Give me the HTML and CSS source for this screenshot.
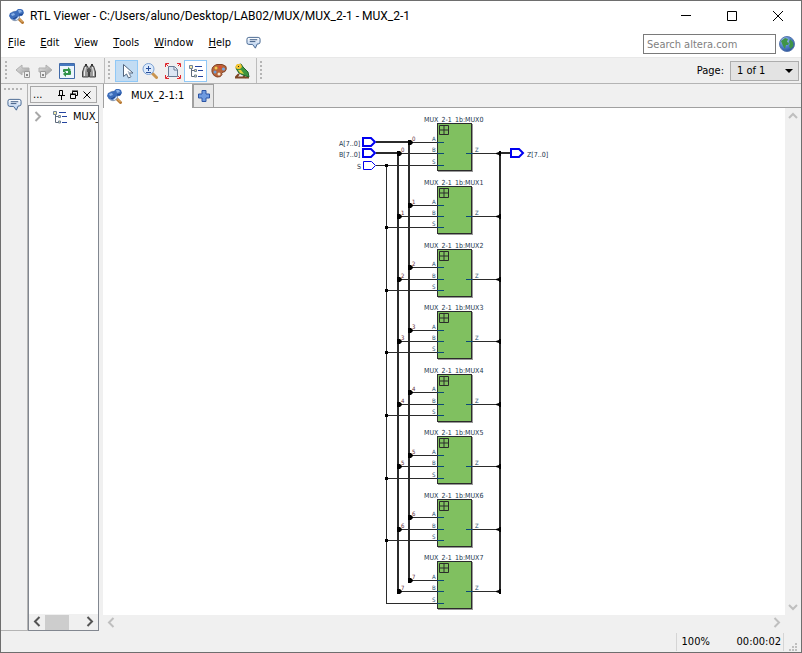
FILE: index.html
```html
<!DOCTYPE html>
<html lang="en">
<head>
<meta charset="utf-8">
<title>RTL Viewer</title>
<link rel="stylesheet" href="styles.css">
</head>
<body>
<svg class="defs" aria-hidden="true">
  <defs>
    <radialGradient id="ball" cx="35%" cy="30%" r="75%"><stop offset="0" stop-color="#c4dafa"/><stop offset=".5" stop-color="#5585d0"/><stop offset="1" stop-color="#284f9a"/></radialGradient>
    <linearGradient id="bubble-fill" x2="0" y2="1"><stop offset="0" stop-color="#fff"/><stop offset="1" stop-color="#a9c6ec"/></linearGradient>
    <linearGradient id="arrow-fill" x2="1" y2="1"><stop offset="0" stop-color="#e4e4e4"/><stop offset="1" stop-color="#9c9c9c"/></linearGradient>
    <symbol id="viewer" viewBox="0 0 16 16">
      <path d="M9 10l4.500 4.500" stroke="#b87a35" stroke-width="3" stroke-linecap="round"/>
      <path d="M9.500 10l4 4" stroke="#eec078"/>
      <circle cx="6" cy="8" r="4.700" fill="#e4edf8" stroke="#8396b2"/>
      <path d="M7 3l2-2 3 0 2 1 1 3-2 3-3 0-2 2-2 2-4-1-2-3 1-3 3-1z" fill="#3c6dbb"/>
      <path d="M9 2l3 0 1 2-3 1zM2 6l3-1 1 2-3 1z" fill="#8ab2e8"/>
      <path d="M10 7l4-1M4 11l4-2" stroke="#1f458d"/>
    </symbol>
    <symbol id="bubble" viewBox="0 0 16 14">
      <path d="M3 1h10q2 0 2 2v3q0 2-2 2h-1l-2 4.500L7 8.500H3q-2 0-2-2V3q0-2 2-2z" fill="url(#bubble-fill)" stroke="#43648f"/>
      <path d="M4 3.500h8M4 5.500h6" stroke="#36557f"/>
    </symbol>
    <symbol id="tree" viewBox="0 0 16 16">
      <path d="M3.500 5v8.500M3.500 7.500H6M3.500 13.500H6" stroke="#5e6a7a" fill="none"/>
      <path d="M1.500 2.500h3v3h-3zM6.500 6.500h2v2h-2zM6.500 12h2v2h-2z" fill="#f3e9a8" stroke="#71859a"/>
      <path d="M7 3.500h7M10 7.500h5M10 13.500h5" stroke="#2444a0"/>
    </symbol>
    <symbol id="left" viewBox="0 0 16 16"><path d="M10.500 3L6 7.500l4.500 4.500" fill="none" stroke="currentColor" stroke-width="2"/></symbol>
    <symbol id="right" viewBox="0 0 16 16"><path d="M5.500 3L10 7.500 5.500 12" fill="none" stroke="currentColor" stroke-width="2"/></symbol>
    <symbol id="up" viewBox="0 0 16 16"><path d="M4 10l4-4 4 4" fill="none" stroke="currentColor" stroke-width="2"/></symbol>
    <symbol id="down" viewBox="0 0 16 16"><path d="M4 6l4 4 4-4" fill="none" stroke="currentColor" stroke-width="2"/></symbol>
  </defs>
</svg>
<div class="window">
  <header class="titlebar">
    <svg class="icon"><use href="#viewer"/></svg>
    <h1>RTL Viewer - C:/Users/aluno/Desktop/LAB02/MUX/MUX_2-1 - MUX_2-1</h1>
    <div class="caption">
      <button aria-label="Minimize"><svg viewBox="0 0 12 12"><path d="M1 5.500h10"/></svg></button>
      <button aria-label="Maximize"><svg viewBox="0 0 12 12"><path d="M1.500 1.500h9v9h-9z"/></svg></button>
      <button aria-label="Close"><svg viewBox="0 0 12 12"><path d="M1 1l10 10M11 1L1 11"/></svg></button>
    </div>
  </header>
  <div class="menubar">
    <nav>
      <button><u>F</u>ile</button><button><u>E</u>dit</button><button><u>V</u>iew</button><button><u>T</u>ools</button><button><u>W</u>indow</button><button><u>H</u>elp</button>
      <button aria-label="Feedback"><svg class="bubble"><use href="#bubble"/></svg></button>
    </nav>
    <form class="search">
      <input type="text" placeholder="Search altera.com" aria-label="Search altera.com">
      <button type="button" aria-label="Search the web">
        <svg class="icon" viewBox="0 0 16 16"><circle cx="8" cy="8" r="7.500" fill="url(#ball)" stroke="#5878ae"/><path d="M2 5l4-3 3 1-1 3 2 1-1 2H7l-1 4-2-3zM11 3l3 3 .500 4-3 3-1.500-3 1-2-1-2z" fill="#3f9448"/></svg>
      </button>
    </form>
  </div>
  <div class="toolbar">
    <i class="grip"></i>
    <div class="tools nav-tools">
      <button aria-label="Back"><svg class="icon" viewBox="0 0 16 16"><path d="M1 7l6-5v3h7v4H7v3z" fill="url(#arrow-fill)" stroke="#b0b0b0"/><path d="M9.500 8.500h5v6h-5z" fill="#eee" stroke="#999"/><path d="M11 11h2v2h-2z" fill="#888"/></svg></button>
      <button aria-label="Forward"><svg class="icon" viewBox="0 0 16 16"><path d="M15 7L9 2v3H2v4h7v3z" fill="url(#arrow-fill)" stroke="#b0b0b0"/><path d="M3.500 8.500h5v6h-5z" fill="#eee" stroke="#999"/><path d="M5 11h2v2H5z" fill="#888"/></svg></button>
      <button aria-label="Refresh"><svg class="icon" viewBox="0 0 16 16"><path d="M.500.500h15v15H.500z" fill="#edf5fc" stroke="#416aa8"/><path d="M1 1h14v2H1z" fill="#4679c0"/><path d="M4 9V7q0-1 1-1h4V4l3 3-3 3V8H6v1zM12 8v3q0 1-1 1H7v2l-3-3 3-3v2h3V8z" fill="#309349"/></svg></button>
      <button aria-label="Find"><svg class="icon" viewBox="0 0 16 16"><path d="M3.500 3h3l1 3v8h-6v-5zM9.500 3h3l2 6v5h-6V6z" fill="#999" stroke="#444"/><path d="M6 6h4v3H6z" fill="#555"/><path d="M4.500 4l-1 5v4M11.500 4l1 5v4" stroke="#eee" fill="none"/><path d="M4 2h2M10 2h2" stroke="#333" stroke-width="2"/></svg></button>
    </div>
    <i class="rule"></i><i class="grip"></i>
    <div class="tools">
      <button class="pressed" aria-label="Selection tool"><svg class="icon" viewBox="0 0 16 16"><path d="M4.500 1.500v12l3-2.500 2 4 2.500-1.300-2-3.700h4z" fill="#fff" stroke="#52647c"/><path d="M9 8l3 6" stroke="#9eacbf"/></svg></button>
      <button aria-label="Zoom tool"><svg class="icon" viewBox="0 0 16 16"><path d="M10.500 10.500l4 4" stroke="#c99550" stroke-width="3" stroke-linecap="round"/><circle cx="6.500" cy="6" r="5.500" fill="#dceafb" stroke="#7ba0d2"/><path d="M4 5.500h5M6.500 3v5M4 9.500h5" stroke="#284e9b"/></svg></button>
      <button aria-label="Fit in window"><svg class="icon" viewBox="0 0 16 16"><path d="M3.500 3.500h6l3 3v7h-9z" fill="#dce6f3" stroke="#667b95"/><path d="M9 4v3h3" fill="#fff" stroke="#667b95"/><path d="M.500 4V.500H4M12 .500h3.500V4M.500 12v3.500H4M15.500 12v3.500H12M1 1l2 2M15 1l-2 2M1 15l2-2M15 15l-2-2" fill="none" stroke="#e1262d"/></svg></button>
      <button class="pressed checked" aria-label="Netlist navigator"><svg class="icon"><use href="#tree"/></svg></button>
      <button aria-label="Color settings"><svg class="icon" viewBox="0 0 16 16"><path d="M1 9Q0 3 6 1.500q6-1 9 2 1 3-1 5l-3 1q-1 0 0 2-1 3-5 2.500-4-1-5-5z" fill="#b8653a" stroke="#824225"/><circle cx="5" cy="5" r="1.500" fill="#f3ca50"/><circle cx="9" cy="4" r="1.500" fill="#e0492d"/><circle cx="12.500" cy="6" r="1.500" fill="#72a8e8"/><circle cx="4" cy="9" r="1.500" fill="#69a0dc"/><circle cx="8" cy="11" r="1.500" fill="#f4e4ce"/></svg></button>
      <button aria-label="Bird's eye view"><svg class="icon" viewBox="0 0 16 16"><path d="M1 14.500h14M5 11l-3 3M9 13l3 2" stroke="#7e4725" stroke-width="2"/><path d="M2 5l1-3 4-1 2 3 5 5 1 5-6-2-4-2-2-3z" fill="#3f963e" stroke="#24642c"/><path d="M1 4l2-3 4 0 1 3-2 2-3 0z" fill="#f1c332"/><path d="M4 7l3 0 3 4-4-1z" fill="#e5d33e"/><path d="M4 3h1v1H4z" fill="#222"/></svg></button>
    </div>
    <i class="rule"></i><i class="grip"></i>
    <label class="page">Page: <span class="select"><select><option>1 of 1</option></select></span></label>
  </div>
  <main>
    <aside class="dock"><i class="hgrip"></i><button aria-label="Messages"><svg class="bubble"><use href="#bubble"/></svg></button></aside>
    <section class="navigator">
      <div class="panel-title"><span>...</span>
        <button aria-label="Pin"><svg viewBox="0 0 10 10"><path d="M3.500 5V.500h3V5M2 5.500h7M5.500 6v4"/></svg></button>
        <button aria-label="Float"><svg viewBox="0 0 10 10"><path d="M3.500 4V1.500h5v4H7M1.500 4.500h5v4h-5zM3 1h6M1 4h6"/></svg></button>
        <button aria-label="Close panel"><svg viewBox="0 0 10 10"><path d="M1.500 1.500l7 7M8.500 1.500l-7 7"/></svg></button>
      </div>
      <div class="tree">
        <div class="node"><svg class="icon expand"><use href="#right"/></svg><svg class="icon"><use href="#tree"/></svg><span>MUX_2-1</span></div>
        <div class="hscroll"><button aria-label="Scroll left"><svg class="icon"><use href="#left"/></svg></button><i class="thumb"></i><button aria-label="Scroll right"><svg class="icon"><use href="#right"/></svg></button></div>
      </div>
    </section>
    <section class="workspace">
      <div class="tabs">
        <button class="tab"><svg class="icon"><use href="#viewer"/></svg>MUX_2-1:1</button>
        <button class="add" aria-label="New tab"><svg class="icon" viewBox="0 0 16 16"><path d="M6 2.500h4V6h3.500v4H10v3.500H6V10H2.500V6H6z" fill="#6f9be0" stroke="#2c55a5"/></svg></button>
      </div>
      <div class="view">
        <div class="canvas"><svg id="schematic" viewBox="334 108 220 506" width="220" height="506" role="img" aria-label="MUX_2-1 schematic"></svg></div>
        <div class="vbar"><svg class="icon"><use href="#up"/></svg><svg class="icon"><use href="#down"/></svg></div>
        <div class="hbar"><svg class="icon"><use href="#left"/></svg><svg class="icon"><use href="#right"/></svg></div>
      </div>
    </section>
  </main>
  <footer><span class="zoom">100%</span><span class="time">00:00:02</span>
    <svg class="size-grip" viewBox="0 0 9 9"><path d="M6 0h2v2H6zM3 3h2v2H3zM6 3h2v2H6zM0 6h2v2H0zM3 6h2v2H3zM6 6h2v2H6z" fill="#bfbfbf"/></svg>
  </footer>
</div>
<script src="script.js"></script>
</body>
</html>
```
FILE: styles.css
```css
* { box-sizing: border-box; }
body { margin: 0; font: 11px/14px "DejaVu Sans Condensed", "DejaVu Sans", sans-serif; color: #000; }
button { padding: 0; border: 0; background: none; font: inherit; color: inherit; display: flex; align-items: center; justify-content: center; }
svg { display: block; flex: none; }
.defs { position: absolute; width: 0; height: 0; }
.icon { width: 16px; height: 16px; }
.bubble { width: 15px; height: 14px; }
.window { height: 100vh; display: flex; flex-direction: column; background: #f0f0f0; border: 1px solid #6e6e6e; overflow: hidden; }

.titlebar { height: 29px; flex: none; display: flex; align-items: center; padding-left: 8px; gap: 5px; background: #fff; }
h1 { margin: 0; font: 12px/16px Roboto, sans-serif; white-space: nowrap; }
.caption { margin-left: auto; display: flex; }
.caption button { width: 46px; height: 28px; }
.caption svg { width: 12px; height: 12px; fill: none; stroke: #000; }

.menubar { height: 28px; flex: none; display: flex; background: #fff; border-bottom: 1px solid #e8e8e8; }
nav { display: flex; align-items: center; gap: 15px; padding: 0 0 2px 7px; }
.search { margin-left: auto; display: flex; gap: 3px; padding: 3px 6px 2px 2px; align-items: center; }
.search input { width: 133px; height: 20px; padding: 0 3px; border: 1px solid #7a7a7a; font: inherit; }
.search input::placeholder { color: #7f7f7f; opacity: 1; }

.toolbar { height: 26px; flex: none; display: flex; align-items: center; gap: 3px; padding: 0 2px 0 4px; border-bottom: 1px solid #b4b4b4; }
.grip { width: 4px; height: 19px; background: radial-gradient(circle at 1px 1px, #b5b5b5 1px, transparent 1px) 0 0 / 4px 4px; }
.rule { width: 1px; height: 25px; background: #bdbdbd; }
.tools { display: flex; }
.tools button { width: 23px; height: 22px; }
.nav-tools { padding-right: 1px; }
.nav-tools button { width: 22px; }
.tools .pressed { background: #c2dcf3; border: 1px solid #90c8f6; }
.tools .checked { background: #fff; }
.page { margin-left: auto; display: flex; align-items: center; gap: 6px; }
.select { position: relative; }
.select::after { content: ""; position: absolute; right: 6px; top: 8px; border: 4px solid transparent; border-top-color: #000; pointer-events: none; }
select { appearance: none; display: block; width: 69px; height: 20px; padding: 0 6px; border: 1px solid #adadad; border-radius: 0; background: #e3e3e3; font: inherit; color: #000; }

main { flex: 1; min-height: 0; display: flex; }
.dock { width: 27px; display: flex; flex-direction: column; align-items: center; padding-top: 4px; gap: 8px; border-right: 1px solid #b4b4b4; border-bottom: 1px solid #b4b4b4; }
.hgrip { width: 20px; height: 2px; background: radial-gradient(circle at 1px 1px, #b5b5b5 1px, transparent 1px) 0 0 / 4px 4px; }
.navigator { width: 71px; display: flex; flex-direction: column; padding-top: 2px; }
.panel-title { height: 17px; margin: 0 2px 2px; padding: 0 4px 0 2px; display: flex; align-items: center; gap: 3px; border: 1px solid #a8a8a8; }
.panel-title span { margin-right: auto; }
.panel-title svg { width: 10px; height: 10px; fill: none; stroke: #000; }
.tree { flex: 1; min-height: 0; display: flex; flex-direction: column; border: 1px solid #828790; background: #fff; }
.node { display: flex; align-items: center; height: 22px; padding-left: 1px; overflow: hidden; white-space: nowrap; }
.node .expand { color: #a8a8a8; margin-right: 6px; }
.node span { margin-left: 5px; }
.hscroll { margin-top: auto; height: 16px; display: flex; align-items: center; background: #f0f0f0; color: #555; }
.thumb { width: 24px; height: 15px; background: #cdcdcd; }
.hscroll button:last-child { margin-left: auto; }

.workspace { flex: 1; min-width: 0; display: flex; flex-direction: column; margin-left: 4px; }
.tabs { display: flex; height: 24px; flex: none; border-bottom: 1px solid #a0a0a0; }
.tab { height: 24px; gap: 8px; padding: 0 8px 0 3px; background: #fff; border-left: 1px solid #a0a0a0; }
.add { width: 22px; height: 24px; border: 1px solid #a0a0a0; border-left-width: 2px; background: #e8e8e8; }
.view { flex: 1; min-height: 0; display: grid; grid-template: minmax(0, 1fr) 16px / minmax(0, 1fr) 16px; color: #bfbfbf; }
.canvas { display: flex; justify-content: center; background: #fff; overflow: hidden; }
.vbar { display: flex; flex-direction: column; justify-content: space-between; }
.hbar { display: flex; justify-content: space-between; }

footer { height: 21px; flex: none; display: flex; align-items: center; padding-right: 3px; }
.zoom { margin-left: auto; height: 18px; width: 61px; padding: 2px 0 0 5px; border-left: 1px solid #d5d5d5; }
.time { height: 18px; padding: 2px 2px 0 0; border-right: 1px solid #d5d5d5; }
.size-grip { width: 9px; height: 9px; margin-left: 5px; align-self: flex-end; }

#schematic text { font-family: "DejaVu Sans Condensed", "DejaVu Sans", sans-serif; font-size: 7px; fill: #20344c; }
#schematic .pin { font-size: 6px; fill: #204f70; }
#schematic .index { font-size: 6px; fill: #602c38; }
.wire { stroke: #2b2b2b; stroke-width: 1; fill: none; }
.bus { stroke: #2b2b2b; stroke-width: 2; fill: none; }
.stub { stroke: #0b4876; }
.shadow { fill: #989898; }
.block { fill: #80c060; stroke: #2b2b2b; }
.expander { fill: none; stroke: #2b2b2b; }
.join { fill: #000; }
.port { fill: #fff; stroke: #0000f0; }
.wide { stroke-width: 2; }
```
FILE: script.js
```js
// Draws eight one-bit multiplexers and the buses that connect them.
const svg = document.getElementById("schematic");
const NS = "http://www.w3.org/2000/svg";

function add(tag, attributes, text) {
  const element = document.createElementNS(NS, tag);
  for (const name in attributes) element.setAttribute(name, attributes[name]);
  if (text !== undefined) element.textContent = text;
  svg.appendChild(element);
}
function path(className, d) { add("path", { class: className, d }); }
function label(className, x, y, text) { add("text", { class: className, x, y }, text); }

// Top of each block, then the rows of its A, B and S pins.
const blocks = [
  [123, 142, 153, 165], [186, 205, 216, 227], [249, 267, 279, 290], [311, 330, 341, 352],
  [374, 392, 404, 415], [436, 455, 466, 478], [499, 517, 529, 540], [561, 580, 591, 603]
];

path("wire", "M376 165.500H386.500V603.500");
path("bus", "M376 142H409V580M376 153H398V591M510 153H500V591");

blocks.forEach(([top, a, b, s], i) => {
  add("rect", { class: "shadow", x: 438, y: top + 1, width: 35, height: 48 });
  add("rect", { class: "block", x: 437.5, y: top + 0.5, width: 34, height: 47 });
  const t = top + 2;
  path("expander", `M439.500 ${t + .5}h9v9h-9zM444 ${t + 1}v9M440 ${t + 5}h9`);
  path("wire", `M409 ${a + .5}H437M398 ${b + .5}H437M386 ${s + .5}H437M472 ${b + .5}H500`);
  path("stub", `M437 ${a + .5}h7M437 ${b + .5}h7M437 ${s + .5}h7M466 ${b + .5}h7`);
  path("join", `M408 ${a - 2}h3l2 2v1l-2 2h-3zM397 ${b - 2}h3l2 2v1l-2 2h-3zM501 ${b - 2}h-2v1l-3 1v1l3 1v1h2z`);
  if (i < 7) path("join", `M385 ${s - 1}h3v3h-3z`);
  label("name", 424, top - 1, `MUX_2-1_1b:MUX${i}`);
  label("pin", 432, a - 1, "A");
  label("pin", 432, b - 1, "B");
  label("pin", 432, s - 1, "S");
  label("pin", 475, b - 1, "Z");
  label("index", 412, a - 1, i);
  label("index", 401, b - 1, i);
});

path("port wide", "M363 138h8l4 4-4 4h-8zM363 149h8l4 4-4 4h-8zM511 149h8l4 4-4 4h-8z");
path("port", "M363.500 161.500h8l4 4-4 4h-8z");
label("name", 339, 146, "A[7..0]");
label("name", 339, 157, "B[7..0]");
label("name", 357, 169, "S");
label("name", 527, 157, "Z[7..0]");
```
